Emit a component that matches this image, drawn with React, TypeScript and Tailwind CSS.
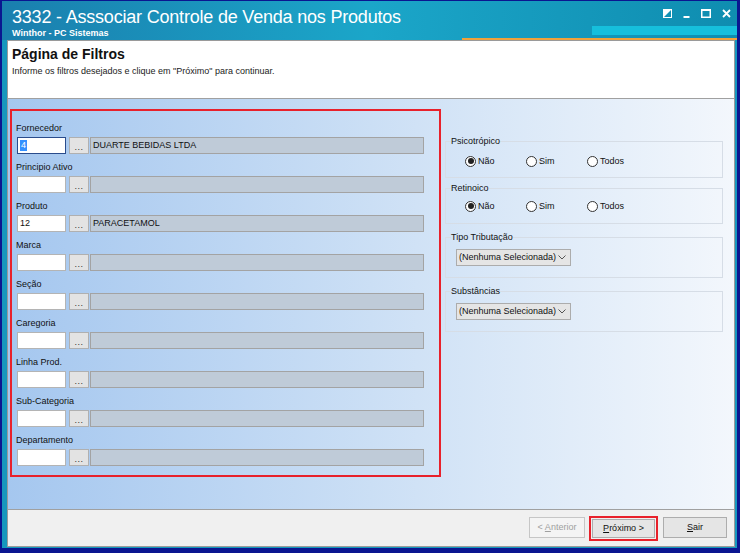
import React from 'react';

const fields = [
  { label: 'Fornecedor', code: '4', desc: 'DUARTE BEBIDAS LTDA', focus: true },
  { label: 'Principio Ativo', code: '', desc: '' },
  { label: 'Produto', code: '12', desc: 'PARACETAMOL' },
  { label: 'Marca', code: '', desc: '' },
  { label: 'Seção', code: '', desc: '' },
  { label: 'Caregoria', code: '', desc: '' },
  { label: 'Linha Prod.', code: '', desc: '' },
  { label: 'Sub-Categoria', code: '', desc: '' },
  { label: 'Departamento', code: '', desc: '' },
];

const font = { fontFamily: '"Liberation Sans", Arial, sans-serif' };

const Radio = ({ label, checked }: { label: string; checked?: boolean }) => (
  <div className="flex items-center w-[61px] h-[14px]">
    <span className="w-[11px] h-[11px] rounded-full border border-[#333] bg-white flex items-center justify-center">
      {checked && <span className="w-[6px] h-[6px] rounded-full bg-[#222]" />}
    </span>
    <span className="ml-[2px] text-[9px] text-[#111] leading-none">{label}</span>
  </div>
);

const RadioGroup = ({ title, className, rowClass }: { title: string; className?: string; rowClass: string }) => (
  <fieldset className={`border border-[#d6dde6] px-[5px] ${className ?? ''}`}>
    <legend className="text-[9px] leading-[12px] text-[#111] px-0">{title}</legend>
    <div className={`flex pl-[14px] ${rowClass}`}>
      <Radio label="Não" checked />
      <Radio label="Sim" />
      <Radio label="Todos" />
    </div>
  </fieldset>
);

const SelectGroup = ({ title, className }: { title: string; className?: string }) => (
  <fieldset className={`border border-[#d6dde6] px-[5px] ${className ?? ''}`}>
    <legend className="text-[9px] leading-[12px] text-[#111] px-0">{title}</legend>
    <div className="mt-[6px] mb-[11px] ml-[5px] w-[115px] h-[17px] bg-[#e5e5e5] border border-[#acacac] flex items-center justify-between pl-[2px] pr-[4px]">
      <span className="text-[9px] text-[#111]">(Nenhuma Selecionada)</span>
      <svg width="8" height="5" viewBox="0 0 8 5" fill="none">
        <path d="M0.5 0.5 L4 4 L7.5 0.5" stroke="#555" strokeWidth="1" />
      </svg>
    </div>
  </fieldset>
);

export default function App() {
  return (
    <div className="w-[740px] h-[553px] bg-[#0a1690] pt-[1px] pl-[2px] pr-[3px] pb-[5px] flex" style={font}>
      <div className="flex-1 flex flex-col bg-[#1797bd] pl-[5px] pr-[2px] pb-[1px]">
        {/* title bar */}
        <div className="h-[39px] -ml-[5px] -mr-[2px] relative bg-linear-to-r from-[#1a7fae] via-[#1ba6c9] to-[#0f8db0] flex flex-col pl-[10px]">
          <div className="text-white text-[18px] leading-[20px] mt-[6px] tracking-[-0.2px]">3332 - Asssociar Controle de Venda nos Produtos</div>
          <div className="text-white text-[9px] font-bold leading-[11px] mt-[1px]">Winthor - PC Sistemas</div>
          <div className="absolute right-0 top-[25px] w-[145px] h-[9px] bg-[#16bfdc]" />
          <div className="absolute right-0 top-[37px] w-[275px] h-[2px] bg-[#f0a23a]" />
          <div className="absolute top-[8px] right-[6px] flex items-center gap-[11px]">
            <svg width="9" height="9" viewBox="0 0 9 9">
              <rect x="0.5" y="0.5" width="8" height="8" fill="none" stroke="white" />
              <path d="M0 0 H9 L0 9 Z" fill="white" />
            </svg>
            <svg width="7" height="9" viewBox="0 0 7 9">
              <rect x="0.5" y="7" width="6" height="2" fill="white" />
            </svg>
            <svg width="10" height="9" viewBox="0 0 10 9">
              <rect x="0.75" y="0.75" width="8.5" height="7.5" fill="none" stroke="white" strokeWidth="1.5" />
              <rect x="0.5" y="0" width="9" height="2" fill="white" />
            </svg>
            <svg width="9" height="9" viewBox="0 0 9 9">
              <path d="M1 1 L8 8 M8 1 L1 8" stroke="white" strokeWidth="1.8" />
            </svg>
          </div>
        </div>

        {/* client */}
        <div className="flex-1 flex flex-col border border-[#9a9a9a] bg-white">
          <div className="h-[58px] bg-white border-b border-[#a0a0a0] pl-[4px]">
            <div className="text-[14px] font-bold text-[#111] leading-[16px] mt-[5px]">Página de Filtros</div>
            <div className="text-[9px] text-[#222] leading-[12px] mt-[3px]">Informe os filtros desejados e clique em "Próximo" para continuar.</div>
          </div>

          <div className="h-[410px] bg-linear-to-r from-[#a5c7ef] via-[#cbdff5] to-[#f3f7fc] flex items-start">
            <div className="ml-[2px] mt-[10px] w-[431px] h-[368px] border-2 border-[#e8212b] pt-[10px] pl-[4px] flex flex-col gap-[6px]">
              {fields.map((f) => (
                <div key={f.label} className="flex flex-col gap-[2px]">
                  <div className="h-[14px] text-[9px] leading-[14px] text-[#111]">{f.label}</div>
                  <div className="flex items-center h-[17px] ml-[1px]">
                    <div className={`w-[49px] h-[17px] bg-white border flex items-center pl-[2px] ${f.focus ? 'border-[#2a4c8c]' : 'border-[#b4b4b4]'}`}>
                      {f.focus ? (
                        <span className="bg-[#3390ff] text-white text-[9px] leading-[11px] px-[1px]">{f.code}</span>
                      ) : (
                        <span className="text-[9px] text-[#111]">{f.code}</span>
                      )}
                    </div>
                    <div className="ml-[3px] w-[20px] h-[17px] bg-[#e3e3e3] border border-[#b0b0b0] flex items-end justify-center pb-[3px]">
                      <span className="text-[9px] leading-[6px] text-[#333] tracking-[0.5px]">...</span>
                    </div>
                    <div className="ml-[1px] w-[334px] h-[17px] bg-[#bfcbd8] border border-[#a3a3a3] flex items-center pl-[2px]">
                      <span className="text-[9px] text-[#111]">{f.desc}</span>
                    </div>
                  </div>
                </div>
              ))}
            </div>

            <div className="ml-[4px] mt-[36px] w-[278px] flex flex-col">
              <RadioGroup title="Psicotrópico" rowClass="mt-[7px] mb-[9px]" />
              <RadioGroup title="Retinoico" className="mt-[4px]" rowClass="mt-[5px] mb-[10px]" />
              <SelectGroup title="Tipo Tributação" className="mt-[7px]" />
              <SelectGroup title="Substâncias" className="mt-[7px]" />
            </div>
          </div>

          <div className="flex-1 bg-[#f0f0f0] border-t border-[#a0a0a0] flex items-start justify-end pr-[7px] pt-[7px]">
            <button className="w-[56px] h-[21px] border border-[#c6c6c6] bg-[#f4f4f4] text-[9px] text-[#a0a0a0]">
              &lt; <span className="underline">A</span>nterior
            </button>
            <div className="ml-[4px] -mt-[1px] border-2 border-[#e8212b] flex p-[1px]">
              <button className="w-[63px] h-[19px] border border-[#adadad] bg-[#e5e5e5] text-[9px] text-[#111]">
                <span className="underline">P</span>róximo &gt;
              </button>
            </div>
            <button className="ml-[5px] w-[64px] h-[21px] border border-[#adadad] bg-[#e5e5e5] text-[9px] text-[#111]">
              <span className="underline">S</span>air
            </button>
          </div>
        </div>
      </div>
    </div>
  );
}
